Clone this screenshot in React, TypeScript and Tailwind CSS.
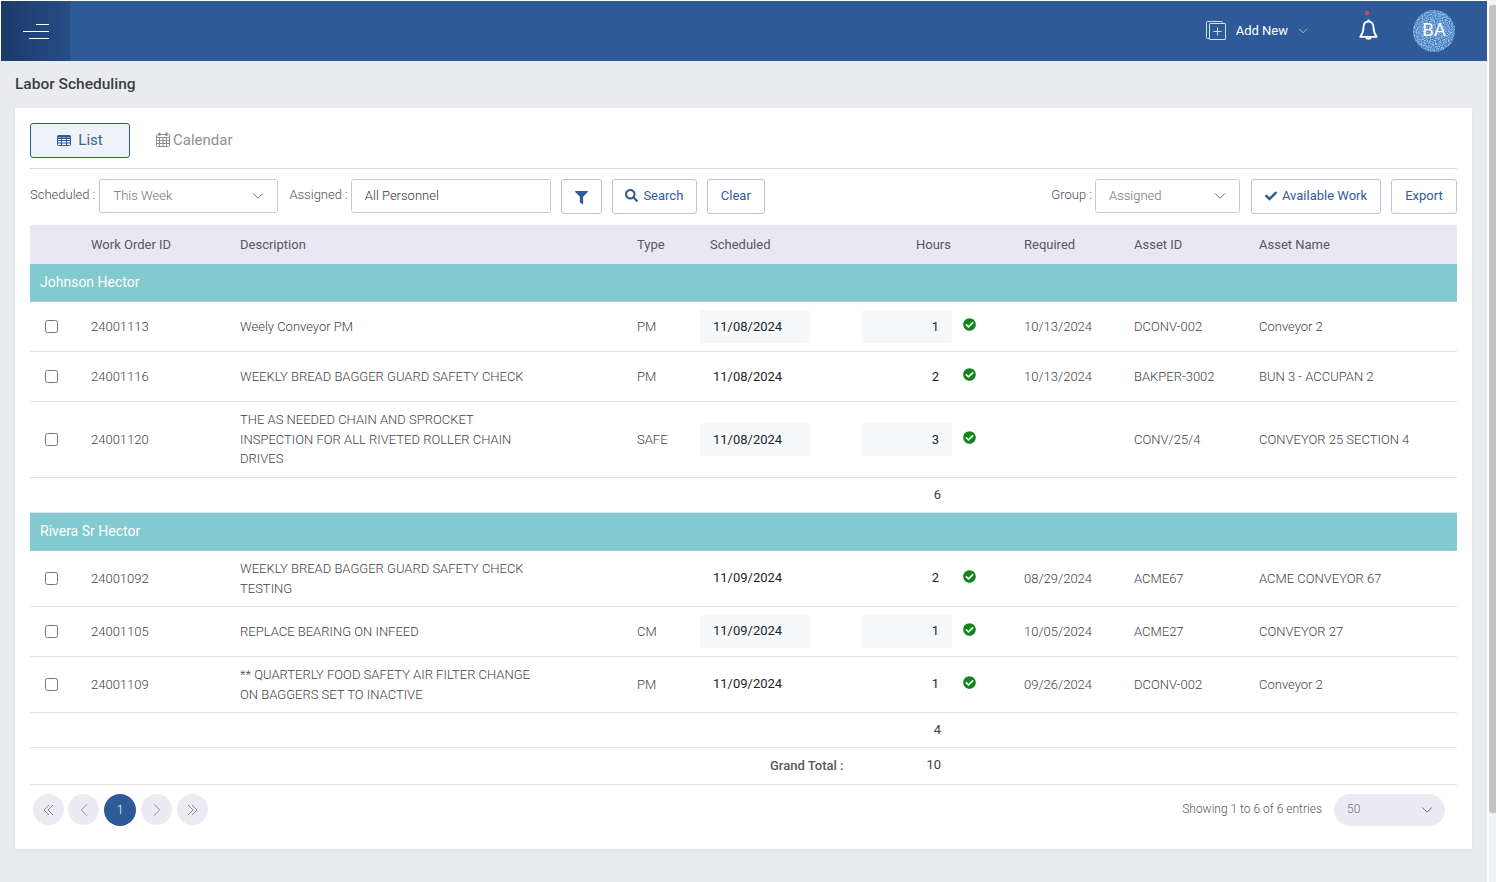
import { ChevronDown, ChevronLeft, ChevronRight } from "lucide-react";
import { FaCheck, FaCheckCircle, FaFilter, FaSearch } from "react-icons/fa";

const COLS = "grid grid-cols-[61px_149px_397px_63px_162px_90px_72px_110px_125px_198px] items-center";

type Row = {
  id: string;
  desc: string[];
  type: string;
  date: string;
  hours: number;
  required: string;
  assetId: string;
  assetName: string;
  height: string;
  dateBox?: boolean;
  hoursBox?: boolean;
  raised?: boolean;
};

const johnson: Row[] = [
  { id: "24001113", desc: ["Weely Conveyor PM"], type: "PM", date: "11/08/2024", hours: 1, required: "10/13/2024", assetId: "DCONV-002", assetName: "Conveyor 2", height: "h-[50px]", dateBox: true, hoursBox: true },
  { id: "24001116", desc: ["WEEKLY BREAD BAGGER GUARD SAFETY CHECK"], type: "PM", date: "11/08/2024", hours: 2, required: "10/13/2024", assetId: "BAKPER-3002", assetName: "BUN 3 - ACCUPAN 2", height: "h-[50px]" },
  { id: "24001120", desc: ["THE AS NEEDED CHAIN AND SPROCKET", "INSPECTION FOR ALL RIVETED ROLLER CHAIN", "DRIVES"], type: "SAFE", date: "11/08/2024", hours: 3, required: "", assetId: "CONV/25/4", assetName: "CONVEYOR 25 SECTION 4", height: "h-[76px]", dateBox: true, hoursBox: true },
];

const rivera: Row[] = [
  { id: "24001092", desc: ["WEEKLY BREAD BAGGER GUARD SAFETY CHECK", "TESTING"], type: "", date: "11/09/2024", hours: 2, required: "08/29/2024", assetId: "ACME67", assetName: "ACME CONVEYOR 67", height: "h-[56px]", raised: true },
  { id: "24001105", desc: ["REPLACE BEARING ON INFEED"], type: "CM", date: "11/09/2024", hours: 1, required: "10/05/2024", assetId: "ACME27", assetName: "CONVEYOR 27", height: "h-[50px]", dateBox: true, hoursBox: true, raised: true },
  { id: "24001109", desc: ["** QUARTERLY FOOD SAFETY AIR FILTER CHANGE", "ON BAGGERS SET TO INACTIVE"], type: "PM", date: "11/09/2024", hours: 1, required: "09/26/2024", assetId: "DCONV-002", assetName: "Conveyor 2", height: "h-[56px]", raised: true },
];

function TableGlyph() {
  return (
    <svg width="14" height="11" viewBox="0 0 14 11" fill="none" stroke="#2f5c99" strokeWidth="1">
      <rect x="0.5" y="0.5" width="13" height="10" rx="1" />
      <path d="M0.5 3.5h13M0.5 5.5h13M0.5 8h13M4.5 0.5v10M9.5 0.5v10" />
      <path d="M0.5 1.5h13" strokeWidth="2" />
    </svg>
  );
}

function CalendarGlyph() {
  return (
    <svg width="14" height="15" viewBox="0 0 14 15" fill="none" stroke="#8d9196" strokeWidth="1">
      <rect x="0.5" y="2.5" width="13" height="12" rx="1" />
      <path d="M0.5 5.5h13M0.5 8.5h13M0.5 11.5h13M3.5 5.5v9M7 5.5v9M10.5 5.5v9" />
      <path d="M3.5 0.5v3.5M10.5 0.5v3.5" strokeWidth="2" />
    </svg>
  );
}

function AddNewGlyph() {
  return (
    <svg width="20" height="19" viewBox="0 0 20 19" fill="none" stroke="#d3deec" strokeWidth="1" className="-mt-[2px]">
      <path d="M3 17.5h-1.5a1 1 0 0 1-1-1v-15a1 1 0 0 1 1-1h14a1 1 0 0 1 1 1v1" />
      <rect x="3.5" y="2.5" width="16" height="16" rx="0.5" />
      <path d="M11.5 6.5v8M7.5 10.5h8" />
    </svg>
  );
}

function BellGlyph() {
  return (
    <svg width="19" height="22" viewBox="0 0 19 22" fill="none" stroke="#ffffff" strokeWidth="1.8" strokeLinejoin="round">
      <path d="M9.5 2.5c-3.4 0-5 2.6-5 6c0 4-1 6.5-3.3 9.3h16.6c-2.3-2.8-3.3-5.3-3.3-9.3c0-3.4-1.6-6-5-6z" />
      <path d="M8.5 1.4h2" />
      <path d="M7 18.3c.5 2.2 4.5 2.2 5 0" />
    </svg>
  );
}

// double chevron, narrower than lucide's
function DoubleChevron({ flip }: { flip?: boolean }) {
  return (
    <svg width="11" height="12" viewBox="0 0 11 12" fill="none" stroke="currentColor" strokeWidth="1" className={flip ? "rotate-180" : ""}>
      <path d="M6 1L1 6l5 5M10 1L5 6l5 5" />
    </svg>
  );
}

function AvatarNoise() {
  return (
    <svg width="42" height="42" className="absolute inset-0">
      <filter id="avatar-speckle">
        <feTurbulence type="fractalNoise" baseFrequency="0.85" numOctaves="2" seed="4" />
        <feColorMatrix type="matrix" values="0 0 0 0 0.78  0 0 0 0 0.87  0 0 0 0 0.97  1.6 0 0 0 -0.55" />
      </filter>
      <rect width="42" height="42" filter="url(#avatar-speckle)" />
    </svg>
  );
}

function Select({ value, width }: { value: string; width: string }) {
  return (
    <div className={`${width} h-[34px] border border-[#c3ccd6] rounded-[3px] flex items-center justify-between pl-[13px] pr-[10px] text-[13px] font-light text-[#6f7479]`}>
      <span>{value}</span>
      <ChevronDown size={18} strokeWidth={1} className="text-[#3c4148]" />
    </div>
  );
}

function OutlineButton({ children, width }: { children: React.ReactNode; width: string }) {
  return (
    <div className={`${width} h-[35px] pb-[2px] border border-[#bcc5cf] rounded-[3px] flex items-center justify-center gap-[5px] text-[13px] text-[#2f5c99]`}>
      {children}
    </div>
  );
}

function WorkRow({ row }: { row: Row }) {
  return (
    <div className={`${COLS} ${row.height} border-b border-[#dfe1e4] text-[13px] font-light text-[#3f4347]`}>
      <div className="pl-[15px] flex">
        <input type="checkbox" className="w-[13px] h-[13px]" />
      </div>
      <div className="text-[#3f4347]">{row.id}</div>
      <div className="leading-[19.5px]">
        {row.desc.map((line) => (
          <div key={line}>{line}</div>
        ))}
      </div>
      <div>{row.type}</div>
      <div className={`w-[110px] h-[33px] pl-[13px] flex items-center font-normal text-[#212529] ${row.raised ? "pb-[2px]" : ""} ${row.dateBox ? "bg-[#f7f8f9]" : ""}`}>
        {row.date}
      </div>
      <div className={`h-[33px] pr-[13px] flex items-center justify-end font-normal text-[#212529] ${row.raised ? "pb-[2px]" : ""} ${row.hoursBox ? "bg-[#f7f8f9]" : ""}`}>
        {row.hours}
      </div>
      <div className="pl-[11px] pb-[5px]">
        <FaCheckCircle size={13} className="text-[#12861c]" />
      </div>
      <div>{row.required}</div>
      <div>{row.assetId}</div>
      <div>{row.assetName}</div>
    </div>
  );
}

function GroupRow({ name, height }: { name: string; height: string }) {
  return (
    <div className={`${height} bg-[#82cad0] flex items-center pl-[10px] text-[14px] text-white border-b border-[#a3c9d4]`}>
      {name}
    </div>
  );
}

function TotalRow({ value, height }: { value: number; height: string }) {
  return (
    <div className={`${COLS} ${height} border-b border-[#dfe1e4] text-[13px] text-[#3a3e42]`}>
      <div className="col-start-6 pr-[11px] text-right">{value}</div>
    </div>
  );
}

function PageButton({ children }: { children: React.ReactNode }) {
  return (
    <div className="w-[31px] h-[31px] rounded-full bg-[#ecebf3] flex items-center justify-center text-[#858994]">
      {children}
    </div>
  );
}

export default function App() {
  return (
    <div className="w-[1496px] h-[882px] overflow-hidden flex bg-white font-['Roboto',sans-serif]">
      <div className="w-[1487px] pt-px">
        <header className="ml-px h-[60px] bg-[#2e5a98] flex items-center">
          <div className="w-[69px] h-full bg-gradient-to-r from-[#1c3a6b] to-[#264d86] flex flex-col items-end gap-[6px] pr-[21px] justify-center">
            <span className="w-[13px] h-px bg-white" />
            <span className="w-[26px] h-px bg-white" />
            <span className="w-[20px] h-px bg-white" />
          </div>
          <div className="ml-auto flex items-center">
            <AddNewGlyph />
            <span className="ml-[10px] text-[13px] text-white">Add New</span>
            <ChevronDown size={14} strokeWidth={1.25} className="ml-[8px] text-[#d3deec]" />
            <div className="relative ml-[49px] -mt-[3px] flex">
              <BellGlyph />
              <span className="absolute left-[6px] -top-[8px] w-[4px] h-[4px] rounded-[1px] bg-[#d8405f]" />
            </div>
            <div className="relative overflow-hidden ml-[35px] mr-[32px] w-[42px] h-[42px] rounded-full bg-[#3f7dc2] flex items-center justify-center text-[18.5px] text-white">
              <AvatarNoise />
              <span className="relative">BA</span>
            </div>
          </div>
        </header>

        <main className="h-[821px] bg-[#e9ebee] px-[15px]">
          <h1 className="h-[47px] flex items-center text-[15.5px] font-medium text-[#3b3f44]">Labor Scheduling</h1>
          <section className="h-[741px] bg-white px-[15px] pt-[15px] shadow-[0_1px_4px_rgba(0,0,0,0.06)]">
            <div className="h-[46px] flex border-b border-[#d9dcdf]">
              <div className="w-[100px] h-[35px] border border-[#2f5c99] rounded-[3px] bg-[#eff2f6] flex items-center justify-center gap-[7px] text-[15px] text-[#3f5f8c]">
                <TableGlyph />
                List
              </div>
              <div className="ml-[26px] h-[35px] flex items-center gap-[3px] text-[15px] text-[#8d9196]">
                <span className="flex -mt-[3px]">
                  <CalendarGlyph />
                </span>
                Calendar
              </div>
            </div>

            <div className="h-[56px] flex items-start pt-[10px]">
              <span className="h-[34px] flex items-center -mt-[1px] text-[13px] font-light text-[#4b4f54] mr-[4px]">Scheduled :</span>
              <Select value="This Week" width="w-[179px]" />
              <span className="h-[34px] flex items-center -mt-[1px] ml-[11px] text-[13px] font-light text-[#4b4f54] mr-[3px]">Assigned :</span>
              <div className="w-[200px] h-[34px] border border-[#c3ccd6] rounded-[3px] flex items-center pl-[13px] text-[13px] font-light text-[#33373b]">
                All Personnel
              </div>
              <div className="ml-[10px]">
                <OutlineButton width="w-[41px]">
                  <FaFilter size={13} className="mt-[3px]" />
                </OutlineButton>
              </div>
              <div className="ml-[10px]">
                <OutlineButton width="w-[85px]">
                  <FaSearch size={13} />
                  Search
                </OutlineButton>
              </div>
              <div className="ml-[10px]">
                <OutlineButton width="w-[58px]">Clear</OutlineButton>
              </div>
              <span className="h-[34px] flex items-center -mt-[1px] ml-auto text-[13px] font-light text-[#4b4f54] mr-[3px]">Group :</span>
              <Select value="Assigned" width="w-[145px]" />
              <div className="ml-[11px]">
                <OutlineButton width="w-[130px]">
                  <FaCheck size={12} />
                  Available Work
                </OutlineButton>
              </div>
              <div className="ml-[10px]">
                <OutlineButton width="w-[66px]">Export</OutlineButton>
              </div>
            </div>

            <div className={`${COLS} h-[39px] bg-[#e9e7f2] text-[13px] text-[#55595e]`}>
              <div />
              <div>Work Order ID</div>
              <div>Description</div>
              <div>Type</div>
              <div className="pl-[10px]">Scheduled</div>
              <div className="text-right pr-px">Hours</div>
              <div />
              <div>Required</div>
              <div>Asset ID</div>
              <div>Asset Name</div>
            </div>

            <GroupRow name="Johnson Hector" height="h-[38px]" />
            {johnson.map((row) => (
              <WorkRow key={row.id} row={row} />
            ))}
            <TotalRow value={6} height="h-[35px]" />

            <GroupRow name="Rivera Sr Hector" height="h-[38px]" />
            {rivera.map((row) => (
              <WorkRow key={row.id} row={row} />
            ))}
            <TotalRow value={4} height="h-[35px]" />

            <div className={`${COLS} h-[37px] border-b border-[#dfe1e4] text-[13px] text-[#3a3e42]`}>
              <div className="col-start-5 col-span-1 pl-[70px] whitespace-nowrap font-medium text-[#55595e]">Grand Total :</div>
              <div className="pr-[11px] pb-[2px] text-right">10</div>
            </div>

            <div className="h-[49px] flex items-center pl-[3px] pr-[12px]">
              <div className="flex items-center">
                <PageButton><DoubleChevron /></PageButton>
                <div className="ml-[4px]">
                  <PageButton><ChevronLeft size={22} strokeWidth={1} /></PageButton>
                </div>
                <div className="ml-[5px] w-[32px] h-[32px] rounded-full bg-[#2e5a98] flex items-center justify-center text-[12px] font-light text-white">1</div>
                <div className="ml-[5px]">
                  <PageButton><ChevronRight size={22} strokeWidth={1} /></PageButton>
                </div>
                <div className="ml-[5px]">
                  <PageButton><DoubleChevron flip /></PageButton>
                </div>
              </div>
              <span className="ml-auto -mt-px text-[12px] font-light text-[#55595e]">Showing 1 to 6 of 6 entries</span>
              <div className="ml-[12px] w-[111px] h-[32px] rounded-full bg-[#ecebf3] flex items-center justify-between pl-[13px] pr-[9px] text-[12px] font-light text-[#6f7479]">
                <span className="-mt-[2px]">50</span>
                <ChevronDown size={18} strokeWidth={1} className="text-[#3c4148]" />
              </div>
            </div>
          </section>
        </main>
      </div>

      {/* page scrollbar */}
      <div className="ml-[2px] w-[7px] bg-[#f1f2f3]">
        <div className="mt-[5px] h-[808px] rounded-l-[3px] bg-[#c4c4c4]" />
      </div>
    </div>
  );
}
